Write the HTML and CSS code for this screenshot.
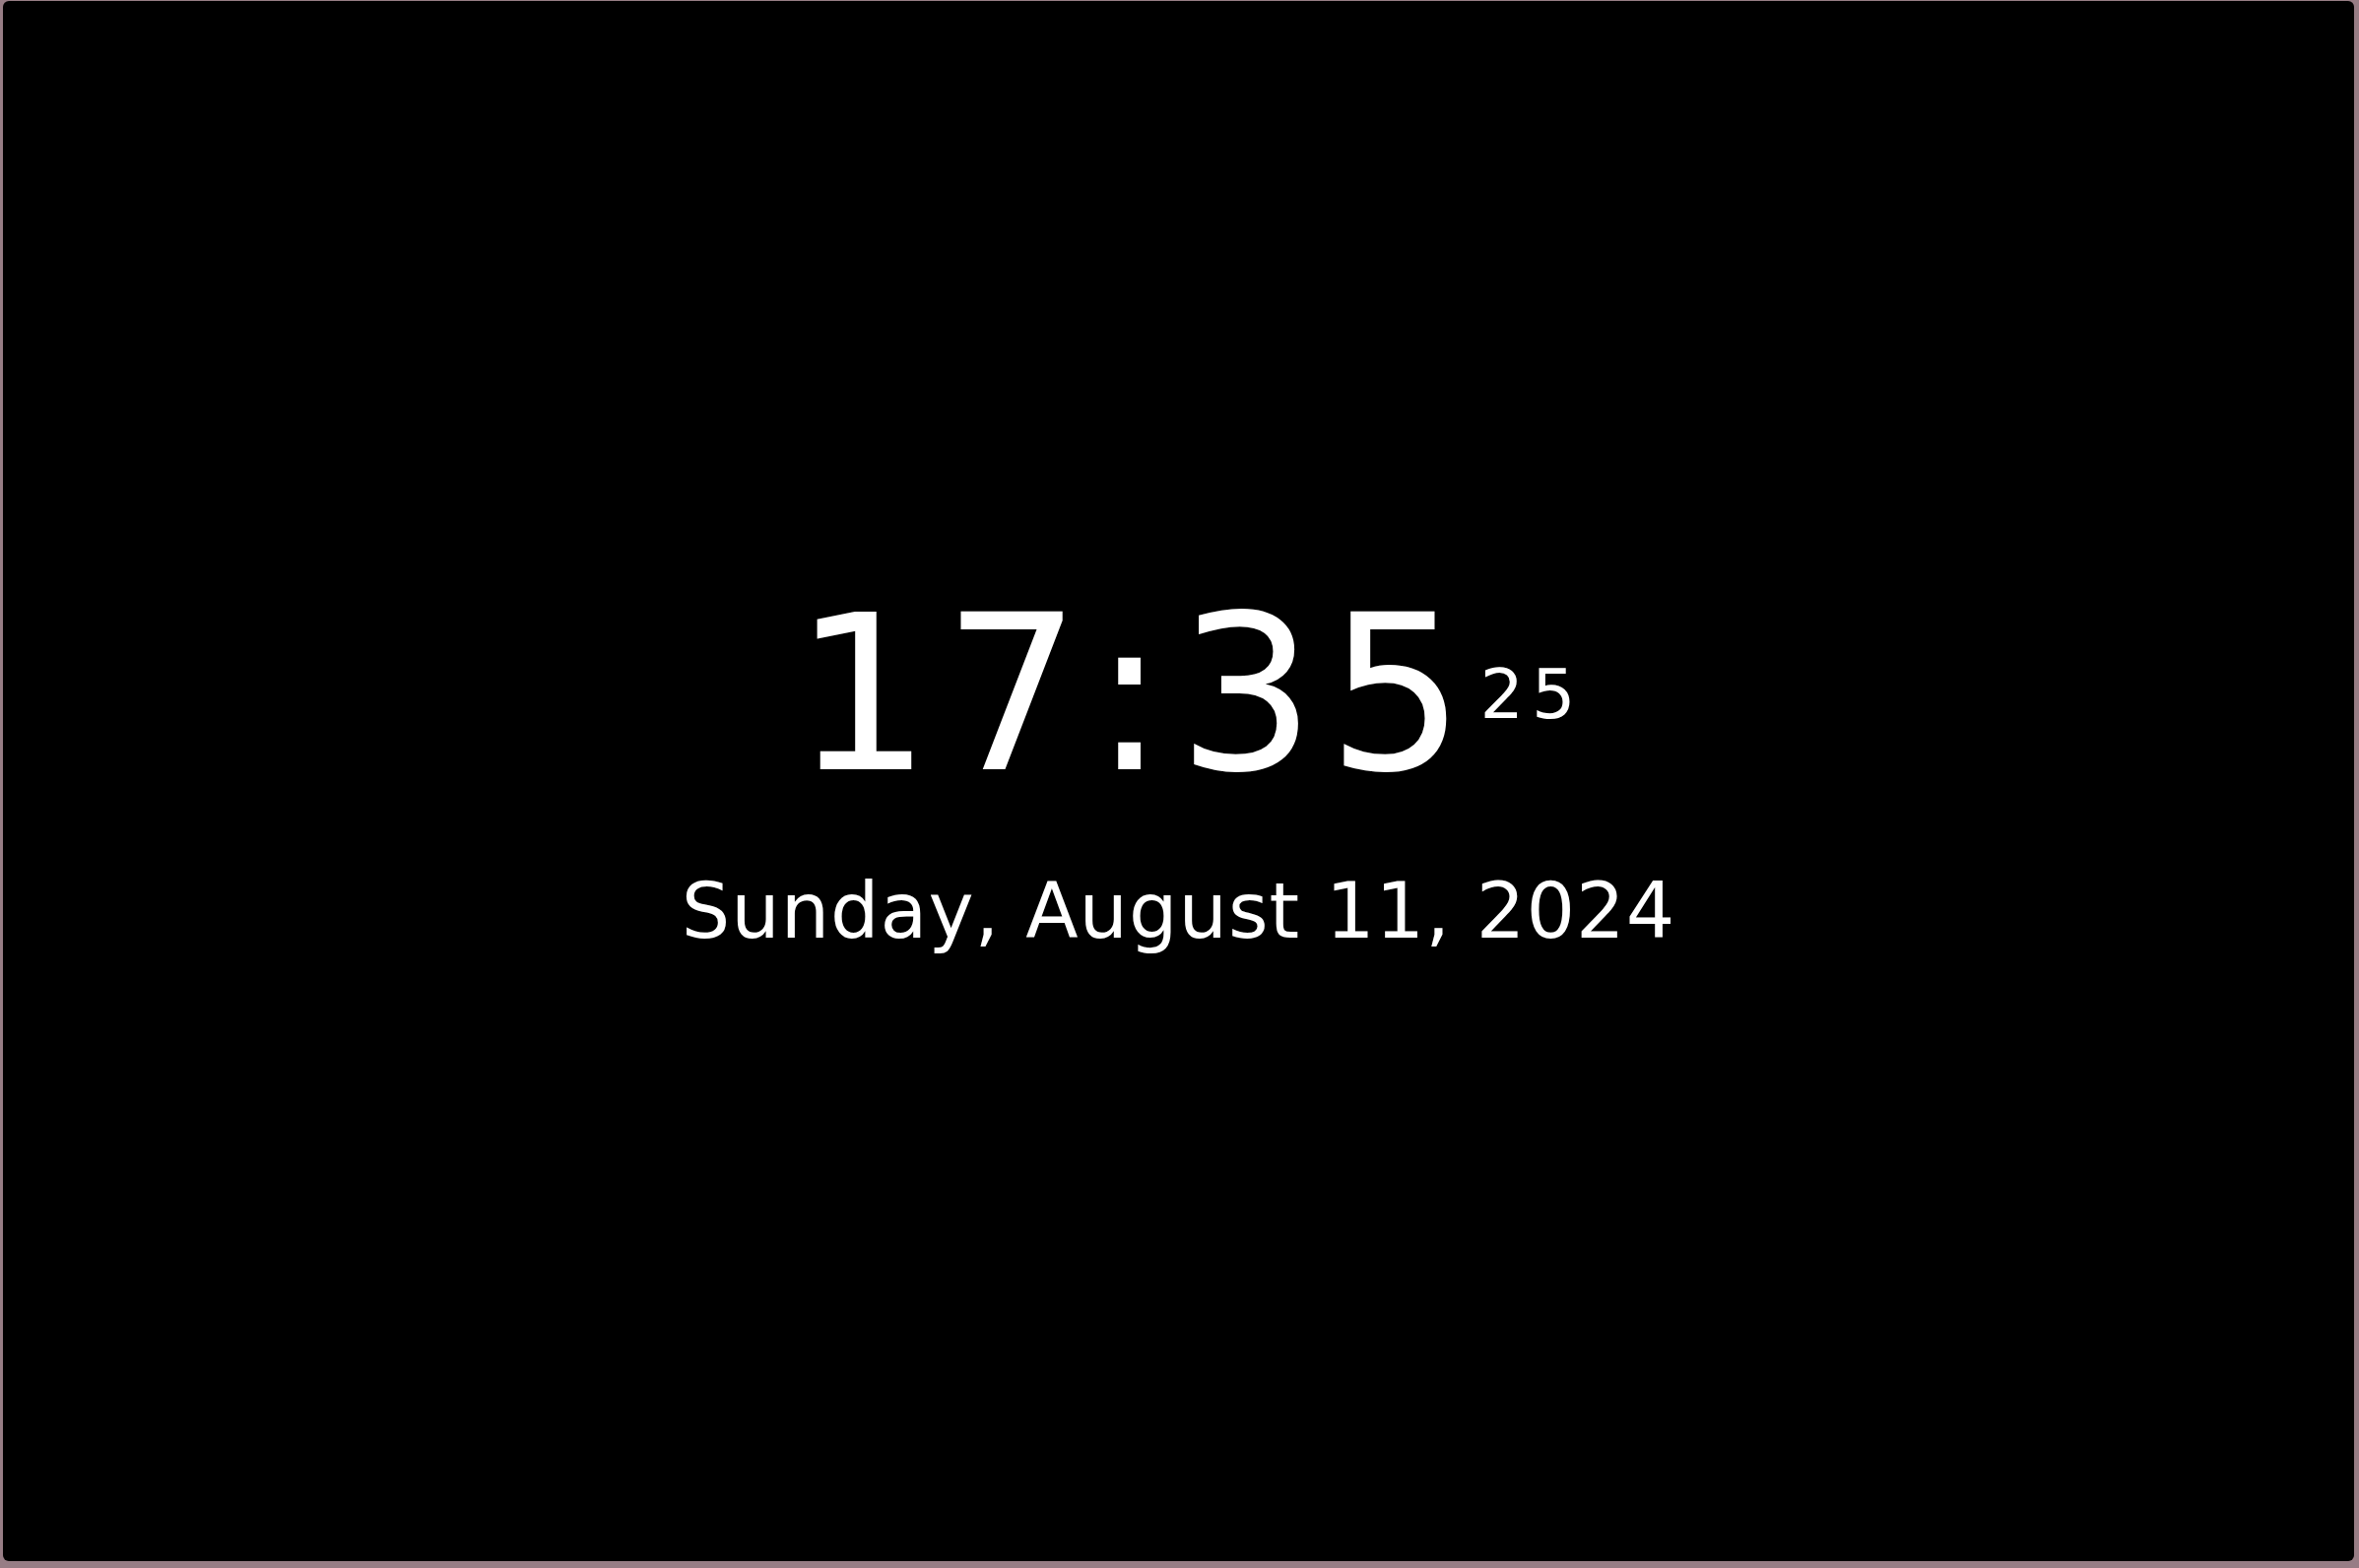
FILE: index.html
```html
<!DOCTYPE html>
<html>
<head>
<meta charset="utf-8">
<link rel="stylesheet" href="styles.css">
</head>
<body>
<div class="screen">
  <div class="clock">
    <div class="time-row">
      <span class="time">17:35</span><span class="sec">25</span>
    </div>
    <div class="date">Sunday, August 11, 2024</div>
  </div>
</div>
</body>
</html>
```
FILE: styles.css
```css
html, body {
  margin: 0;
  height: 100%;
}
body {
  background: #977d85;
  padding: 1px 5px 7px 3px;
  box-sizing: border-box;
}
.screen {
  height: 100%;
  background: #000;
  border-radius: 6px;
  display: flex;
  align-items: center;
  justify-content: center;
  color: #fff;
  font-family: "DejaVu Sans", sans-serif;
}
.clock {
  display: flex;
  flex-direction: column;
  align-items: center;
  padding-bottom: 28px;
}
.time-row {
  display: flex;
  align-items: center;
  padding-left: 20px;
}
.time {
  font-size: 220px;
  line-height: 1;
  letter-spacing: 12px;
}
.sec {
  font-size: 70px;
  line-height: 1;
  letter-spacing: 8px;
  margin-left: 3px;
}
.date {
  font-size: 78px;
  line-height: 1;
  margin-top: 71px;
  letter-spacing: 1px;
}
```
